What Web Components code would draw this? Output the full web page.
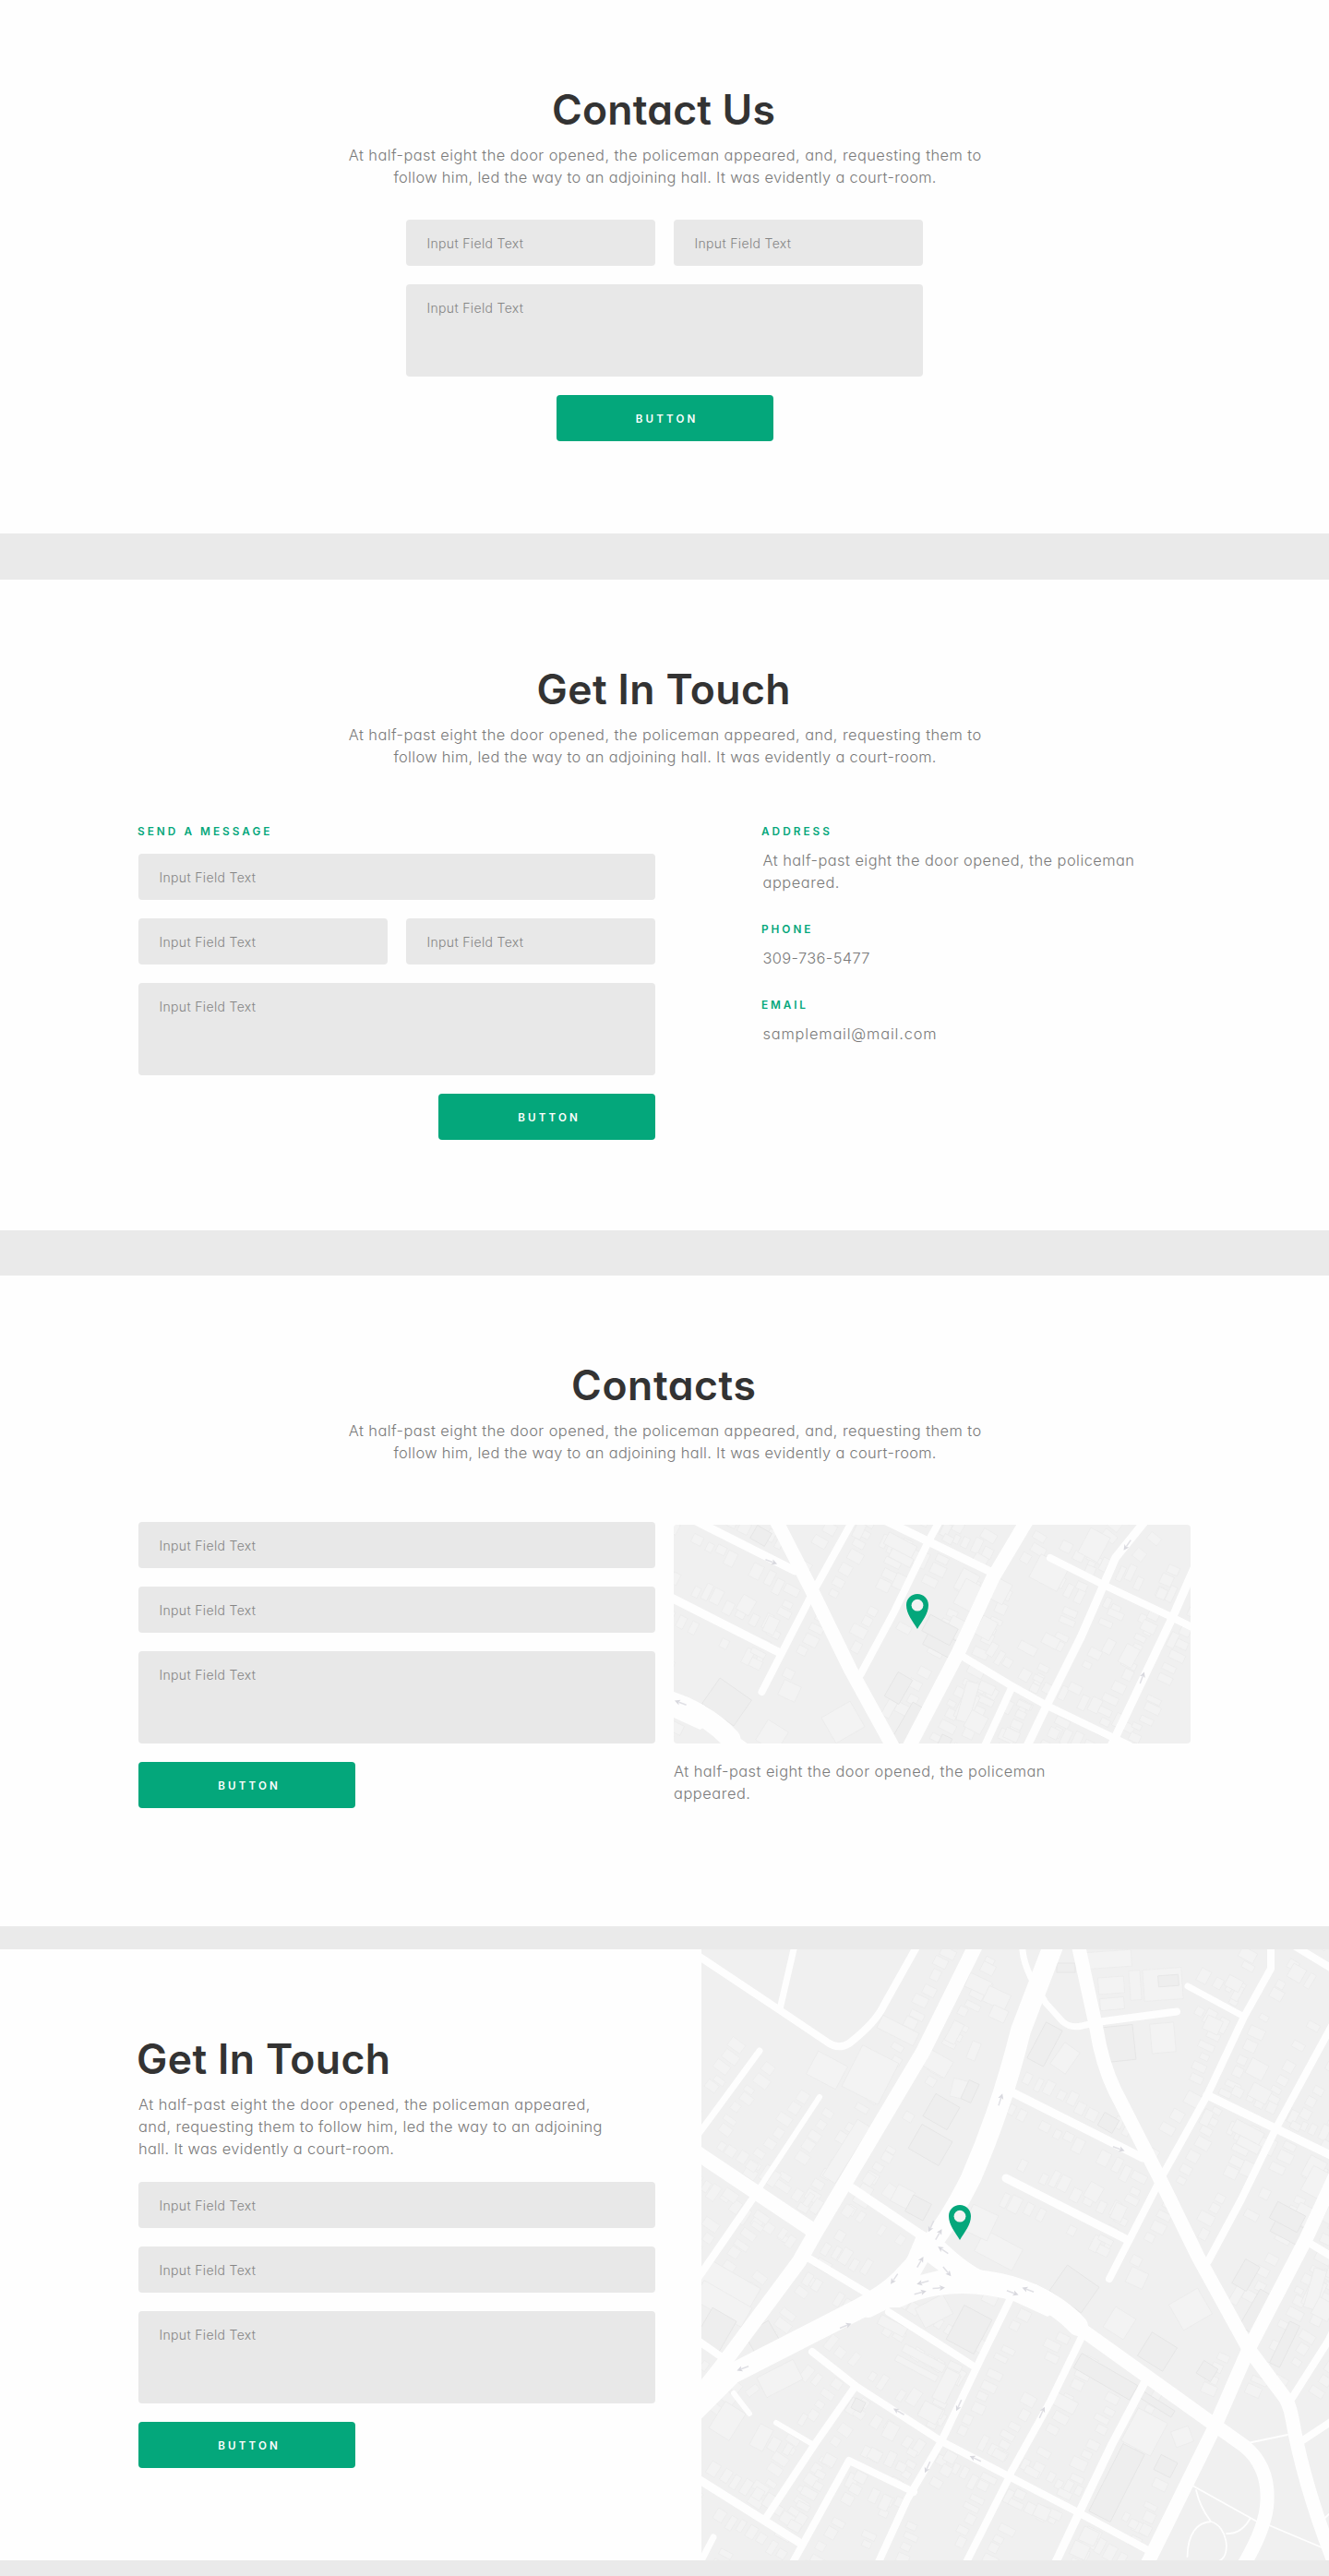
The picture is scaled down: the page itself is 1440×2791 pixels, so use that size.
<!DOCTYPE html>
<html lang="en">
<head>
<meta charset="utf-8">
<title>Contact forms</title>
<style>
  html, body { margin: 0; background: #fff; }
  body { font-family: Inter, "Open Sans", sans-serif; font-feature-settings: "cv11"; color: #333; min-height: 2791px; background: #fff; }
  .fields { display: flex; flex-direction: column; gap: 20px; width: 560px; }
  .row { display: grid; grid-template-columns: 1fr 1fr; gap: 20px; }
  .end { align-self: flex-end; }
  .mid { align-self: center; }
  .columns { display: flex; width: 1140px; margin: 0 auto; }
</style>
</head>
<body>
<contact-section style="--h:578px">
  <section-intro heading="Contact Us" w="242" lines="At half-past eight the door opened, the policeman appeared, and, requesting them to~685.5|follow him, led the way to an adjoining hall. It was evidently a court-room.~588"></section-intro>
  <div class="fields" style="margin:34px auto 0">
    <div class="row"><text-field>Input Field Text</text-field><text-field>Input Field Text</text-field></div>
    <text-field tall>Input Field Text</text-field>
    <push-button class="mid">BUTTON</push-button>
  </div>
</contact-section>
<section-gap style="--h:50px"></section-gap>
<contact-section style="--h:705px">
  <section-intro heading="Get In Touch" w="275" lines="At half-past eight the door opened, the policeman appeared, and, requesting them to~685.5|follow him, led the way to an adjoining hall. It was evidently a court-room.~588"></section-intro>
  <div class="columns" style="margin-top:59px">
    <div>
      <small-label w="143.5">SEND A MESSAGE</small-label>
      <div class="fields" style="margin-top:14px">
        <text-field>Input Field Text</text-field>
        <div class="row"><text-field>Input Field Text</text-field><text-field>Input Field Text</text-field></div>
        <text-field tall>Input Field Text</text-field>
        <push-button class="end">BUTTON</push-button>
      </div>
    </div>
    <div style="margin-left:116px;display:flex;flex-direction:column;gap:29px">
      <contact-detail label="ADDRESS" w="74" lines="At half-past eight the door opened, the policeman~402.5|appeared.~83"></contact-detail>
      <contact-detail label="PHONE" w="53.5" lines="309-736-5477~116"></contact-detail>
      <contact-detail label="EMAIL" w="48" lines="samplemail@mail.com~188"></contact-detail>
    </div>
  </div>
</contact-section>
<section-gap style="--h:49px"></section-gap>
<contact-section style="--h:705px">
  <section-intro heading="Contacts" w="200" lines="At half-past eight the door opened, the policeman appeared, and, requesting them to~685.5|follow him, led the way to an adjoining hall. It was evidently a court-room.~588"></section-intro>
  <div class="columns" style="margin-top:63px;gap:20px">
    <div class="fields">
      <text-field>Input Field Text</text-field>
      <text-field>Input Field Text</text-field>
      <text-field tall>Input Field Text</text-field>
      <push-button>BUTTON</push-button>
    </div>
    <div style="padding-top:3px">
      <street-map view="1106.5 2288 560 237" pin="251.5,75" style="width:560px;height:237px;border-radius:4px"></street-map>
      <text-lines style="margin-top:18px" lines="At half-past eight the door opened, the policeman~402.5|appeared.~83"></text-lines>
    </div>
  </div>
</contact-section>
<section-gap style="--h:25px"></section-gap>
<contact-section style="--h:662px" split>
  <section-intro left heading="Get In Touch" w="275" lines="At half-past eight the door opened, the policeman appeared,~489.5|and, requesting them to follow him, led the way to an adjoining~502.5|hall. It was evidently a court-room.~277"></section-intro>
  <div class="fields" style="margin-top:24px">
    <text-field>Input Field Text</text-field>
    <text-field>Input Field Text</text-field>
    <text-field tall>Input Field Text</text-field>
    <push-button>BUTTON</push-button>
  </div>
  <street-map slot="aside" view="760 2112 680 662" pin="268,276.5" style="width:680px;height:662px"></street-map>
</contact-section>
<section-gap style="--h:17px"></section-gap>

<script>
class Base extends HTMLElement {
  connectedCallback() {
    if (this.shadowRoot) return;
    this.attachShadow({ mode: "open" }).innerHTML = this.render();
    this.after && this.after();
  }
  attr(n) { return this.getAttribute(n) || ""; }
}

/* One line of text, tracked so that it fills a given measure. */
class TrackedLine extends Base {
  render() {
    return `<style>:host{display:block;white-space:nowrap}span{display:inline-block}</style><span>${this.textContent}</span>`;
  }
  after() {
    const s = this.shadowRoot.querySelector("span");
    const n = s.textContent.length - 1;
    const ls = (parseFloat(this.attr("w")) - s.getBoundingClientRect().width) / n;
    s.style.letterSpacing = ls.toFixed(4) + "px";
    s.style.marginRight = (-ls).toFixed(4) + "px";
  }
}

class TextLines extends Base {
  render() {
    const rows = this.attr("lines").split("|").map(r => {
      const [t, w] = r.split("~");
      return `<tracked-line w="${w}">${t}</tracked-line>`;
    }).join("");
    return `<style>:host{display:block;font-size:16.4px;font-weight:300;line-height:24px;color:#7a7a7a}</style>${rows}`;
  }
}

class SectionIntro extends Base {
  render() {
    const left = this.hasAttribute("left");
    return `<style>
      :host{display:block;text-align:${left ? "left" : "center"}}
      h2{margin:0 0 7px;font-size:44.5px;font-weight:600;line-height:60px;color:#333;${left ? "margin-left:-2px" : "padding-right:2px"}}
      text-lines{${left ? "" : "padding-left:1px"}}
    </style><h2><tracked-line w="${this.attr("w")}">${this.attr("heading")}</tracked-line></h2>
    <text-lines lines="${this.attr("lines")}"></text-lines>`;
  }
}

class TextField extends Base {
  render() {
    return `<style>
      :host{display:block;box-sizing:border-box;height:50px;padding:15px 22.5px;border-radius:4px;background:#e8e8e8;font-size:14px;font-weight:300;line-height:21px;color:#858585}
      :host([tall]){height:100px}
    </style><tracked-line w="104.5">${this.textContent}</tracked-line>`;
  }
}

class PushButton extends Base {
  render() {
    return `<style>
      :host{display:block;width:235px;height:50px;border-radius:4px;background:#04a77b;color:#fff;text-align:center}
      button{all:unset;display:block;width:100%;padding-left:2px;box-sizing:border-box;cursor:pointer;font-size:11.6px;font-weight:600;line-height:52px}
    </style><button><tracked-line w="64.5">${this.textContent}</tracked-line></button>`;
  }
}

class SmallLabel extends Base {
  render() {
    return `<style>:host{display:block;margin-left:-1px;font-size:11.8px;font-weight:600;line-height:20px;color:#04a77b}</style><tracked-line w="${this.attr("w")}">${this.textContent}</tracked-line>`;
  }
}

class ContactDetail extends Base {
  render() {
    return `<style>:host{display:block}text-lines{margin:9px 0 0 .5px}</style>
      <small-label w="${this.attr("w")}">${this.attr("label")}</small-label>
      <text-lines lines="${this.attr("lines")}"></text-lines>`;
  }
}

class SectionGap extends Base {
  render() { return `<style>:host{display:block;height:var(--h);background:#eaeaea}</style>`; }
}

class ContactSection extends Base {
  render() {
    return `<style>
      :host{display:block;height:var(--h);overflow:hidden;background:#fefefe}
      .body{padding-top:89px}
      :host([split]){display:flex;justify-content:space-between}
      :host([split]) .body{padding-left:150px}
    </style><div class="body"><slot></slot></div><slot name="aside"></slot>`;
  }
}

/* [stroke width, x, y, x, y, ...] */
const ROADS = [
  [7,860,2112,845,2177],[16,1058,2106,1000,2223,883,2420,866,2450,783,2562,745,2610],
  [7,823,2222,757,2312],[6,888,2272,822,2372],[16,750,2329,883,2418],[8,815,2383,755,2470],
  [10,923,2371,1000,2423],[8,1188,2191,1275,2179.5],
  [9,1095,2266,1238,2338],[9,1090,2360,1222,2427],[8,1377,2106,1377,2133,1348,2185,1308,2270,1258,2360,1202,2469],
  [7,1287,2152,1348,2185],[9,1308,2270,1452,2340],[8,1443,2195,1382,2307,1345,2383,1309,2450],
  [15,1490,2282,1452,2346,1415,2426,1353,2545,1315,2632,1242,2780],
  [8,1420,2431,1470,2461,1511,2484,1600,2527],[8,1514.5,2324,1574,2354,1648,2389,1670,2400],
  [9,1618,2283,1585,2324,1572,2354,1548,2409,1511,2483,1486,2535],[9,1670,2336,1648,2386,1577,2535],
  [8,1472,2466,1440,2535,1400,2598],[8,1445,2622,1410,2645],[8,1402,2108,1445,2134],
  [8,877,2447,945,2488],[8,880,2548,927,2585,1020,2645,1093,2683,1168,2722,1242,2762],
  [8,963,2505,1057,2565],[8,1095,2490,1063,2555,1020,2645,983,2708,950,2780],
  [8,927,2585,883,2648,830,2728],[6,841,2625,880,2648],[6,795,2593,812,2615],[9,755,2685,868,2756],
  [8,990,2700,920,2666,857,2780],[7,773,2749,755,2784],[8,1093,2685,1045,2780],[8,755,2535,785,2556],
  [8,1172,2532,1138,2602,1093,2683],[9,1242,2578,1205,2648,1168,2725,1142,2780]
];
const CURVES = [
  [8,"M755 2118L845 2178L897 2213Q908 2221 920 2214C938 2200 952 2185 958 2172L995 2106"],
  [7,"M1107 2106L1109 2120Q1112 2134 1120 2148L1133 2170L1151 2190Q1160 2198 1172 2195L1190 2191"],
  [15,"M1168 2106L1188 2198Q1194 2236 1208 2265L1255 2357L1298 2445L1353 2545L1388 2592Q1397 2602 1400 2620Q1412 2690 1445 2775"],
  [22,"M1142 2106L1106 2200Q1085 2285 1052 2360Q1020 2425 976 2470Q960 2486 930 2502L793 2572L745 2620"],
  [22,"M940 2500Q1035 2448 1120 2486Q1150 2500 1168 2520"],
  [15,"M1120 2482L1172 2524L1310 2623L1348 2650Q1375 2672 1373 2710Q1372 2738 1347 2780"],
  [1.8,"M1352 2647L1395 2638M1292 2693L1362 2732M1375 2736L1432 2760M1296 2698Q1300 2716 1312 2732M1286.5 2770C1287 2745 1297 2733 1312 2732C1330 2737 1334 2768 1322 2774M1355 2728Q1345 2746 1329 2745M1430 2733L1441 2723"]
];
const ARROWS = [[1009,2412,115],[1017,2421,-60],[1022,2438,215],[1084,2275,-72],[1212,2328,20],[997,2451,-60],[969,2469,125],[1026,2461,50],[1000,2473,165],[997,2484,-15],[1017,2479,-5],[916,2520,-22],[805,2566,160],[1039,2606,115],[974,2613,210],[1057,2664,205],[1005,2673,115],[1114,2481,200],[1097,2484,20],[1129,2614,-65],[1598,2310,125],[1614,2454,-70]];
/* Larger buildings: [cx, cy, width, height, angle, shade] */
const BLOCKS = [
  [973,2200,44,15,27,1],[943,2248,44,50,27,1],[896,2243,36,28,28,1],[917,2331,16,72,32,1],[1016,2236,28,20,30,1],
  [1020,2288,30,28,30,0],[1008,2324,38,30,30,0],[1039,2263,16,20,14,1],[1051,2266,12,22,25,0],[1060,2150,26,16,25,1],
  [1080,2165,26,18,25,1],[1082,2182,18,14,25,1],[1034,2202,12,24,28,1],[1055,2222,10,20,22,1],
  [1155,2132,20,10,0,0],[1200,2123,52,18,-4,1],[1204,2151,28,18,-4,1],[1230,2151,12,32,-4,1],[1260,2150,42,34,-4,1],[1266,2146,22,12,-4,0],
  [1205,2171,26,13,-5,1],[1213,2214,32,38,-6,0],[1260,2208,26,32,-5,1],[1132,2215,20,44,28,0],[1154,2230,20,28,35,1],[1201,2300,18,16,30,0],
  [1362,2242,20,18,28,1],[1314,2194,18,16,25,1],[1365,2268,22,16,28,1],[1337,2149,17,13,28,1],[1352,2118,18,12,28,1],[1405,2138,16,16,30,1],
  [1424,2350,20,24,28,1],[1395,2416,32,20,28,0],[1185,2375,16,18,30,1],[1212,2397,13,18,25,1],[1352,2350,14,16,25,1],
  [1164,2480,42,34,35,0],[1213,2517,26,26,32,1],[1290,2502,36,32,-30,1],[1254,2548,32,30,32,0],[1308,2569,18,16,32,0],
  [1232,2468,20,18,25,1],[1361,2504,16,46,30,0],[1340,2487,10,20,30,1],[1392,2540,12,50,26,0],[1350,2465,18,30,30,0],[1424,2485,18,30,25,1],
  [1198,2575,70,18,30,0],[1254,2605,40,8,32,0],[1240,2635,36,40,28,1],[1210,2690,26,82,27,0],[1263,2672,20,18,27,0],[1281,2640,20,18,-20,1],
  [1154,2604,26,14,28,1],[1180,2748,18,16,25,1],[1170,2763,18,16,25,1],[1129,2722,16,14,25,1],
  [790,2475,64,26,30,1],[783,2496,60,24,30,1],[775,2525,30,40,30,0],[826,2533,30,26,-30,0],[845,2577,44,24,-27,1],
  [788,2623,26,34,32,1],[825,2641,16,26,28,1],[967,2520,32,11,28,1],[1001,2555,50,9,28,1],[993,2566,50,7,28,1],[1050,2524,34,42,28,0],
  [1012,2504,34,24,-28,1],[1025,2585,16,36,27,1],[1008,2614,22,18,28,1],[965,2634,14,18,28,1],[948,2660,14,12,30,1],[930,2606,12,12,27,0],
  [1082,2438,46,26,28,1],[1062,2408,30,30,25,1],[978,2380,20,20,28,1],[995,2392,22,20,28,0],
  [1513,2340,34,28,28,1],[1562,2310,24,30,28,1],[1427,2365,24,30,28,1],[1412,2400,18,22,28,1],[1395,2402,34,20,28,0],[1460,2360,18,24,28,1],
  [1425,2480,14,44,16,1],[1434,2502,20,20,28,1],[1445,2400,18,22,28,1],[1352,2310,34,14,28,1],[1353,2324,26,10,28,1],[1293,2275,18,14,28,1],
  [1490,2422,20,10,28,1],[1515,2414,18,12,28,1],[1578,2420,10,16,28,1],[1600,2430,16,22,28,1]
];
function houses() {
  let seed = 77, out = "";
  const rnd = () => (seed = (seed * 16807) % 2147483647) / 2147483647;
  for (const r of ROADS) {
    const w = r[0];
    if (w === 7 && r[1] === 860) continue;
    for (let i = 1; i + 3 < r.length; i += 2) {
      const [x, y, X, Y] = r.slice(i, i + 4);
      const L = Math.hypot(X - x, Y - y), a = Math.atan2(Y - y, X - x), deg = a * 180 / Math.PI;
      for (const side of [-1, 1]) for (let d = 10; d < L - 8;) {
        const bw = 6 + rnd() * 6, bh = 9 + rnd() * 9;
        if (rnd() > .16) {
          const off = side * (w / 2 + 6 + bh / 2 + rnd() * 6);
          const cx = x + Math.cos(a) * d - Math.sin(a) * off, cy = y + Math.sin(a) * d + Math.cos(a) * off;
          if (!(cx > 1260 && cx < 1440 && cy > 2600) && !(cx > 1180 && cx < 1290 && cy > 2110 && cy < 2235))
            out += `<rect x="${(-bw / 2).toFixed(1)}" y="${(-bh / 2).toFixed(1)}" width="${bw.toFixed(1)}" height="${bh.toFixed(1)}" transform="translate(${cx.toFixed(1)} ${cy.toFixed(1)}) rotate(${deg.toFixed(1)})"/>`;
        }
        d += bw + 2.5 + rnd() * 4;
      }
    }
  }
  return out;
}
class StreetMap extends Base {
  render() {
    const [px, py] = this.attr("pin").split(",");
    const blocks = BLOCKS.map(([x, y, w, h, a, s]) => `<rect x="${-w / 2}" y="${-h / 2}" width="${w}" height="${h}" fill="${s ? "#f3f3f3" : "#eeeeee"}" stroke="${s ? "#ebebeb" : "#e4e4e4"}" transform="translate(${x} ${y}) rotate(${a})"/>`).join("");
    const roads = ROADS.map(r => `<polyline stroke-width="${r[0]}" points="${r.slice(1).join(" ")}"/>`).join("") +
      CURVES.map(([w, d]) => `<path stroke-width="${w}" d="${d}"/>`).join("");
    const arrows = ARROWS.map(([x, y, a]) => `<g transform="translate(${x} ${y}) rotate(${a})"><path d="M-6.5 0H2" stroke="#e0e0e5" stroke-width="1.5"/><path d="M1 -3L7 0L1 3L2.4 0Z" fill="#d8d8de"/></g>`).join("");
    return `<style>
      :host{display:block;position:relative;overflow:hidden;background:#f0f0f0}
      svg{display:block}
      .map{width:100%;height:100%}
      .pin{position:absolute;left:${px}px;top:${py}px}
    </style>
    <svg class="map" viewBox="${this.attr("view")}">
      <g fill="#f3f3f3" stroke="#ebebeb" stroke-width=".7">${houses()}</g>
      <g stroke-width=".8">${blocks}</g>
      <g fill="none" stroke="#fefefe" stroke-linecap="round" stroke-linejoin="round">${roads}</g>
      <path fill="#fefefe" d="M996 2415L1022 2428Q1045 2450 1062 2459Q1078 2465 1100 2467L1140 2484L1152 2500L1135 2510L1098 2493Q1030 2474 975 2500L940 2500L975 2465Z"/>
      <path fill="#f0f0f0" d="M1005 2451L1017 2460L997 2465Z"/>
      ${arrows}
    </svg>
    <svg class="pin" width="24" height="38" viewBox="0 0 24 38"><path fill="#04a77b" fill-rule="evenodd" d="M12 0C18.8 0 24 5.2 24 12C24 21.5 17 29.5 12 38C7 29.5 0 21.5 0 12C0 5.2 5.2 0 12 0Z"/><circle cx="12" cy="12.2" r="6.4" fill="#f3f3f3"/></svg>`;
  }
}

for (const [n, c] of Object.entries({
  "tracked-line": TrackedLine, "text-lines": TextLines, "section-intro": SectionIntro, "text-field": TextField,
  "push-button": PushButton, "small-label": SmallLabel, "contact-detail": ContactDetail,
  "section-gap": SectionGap, "contact-section": ContactSection, "street-map": StreetMap
})) customElements.define(n, c);
</script>
</body>
</html>
